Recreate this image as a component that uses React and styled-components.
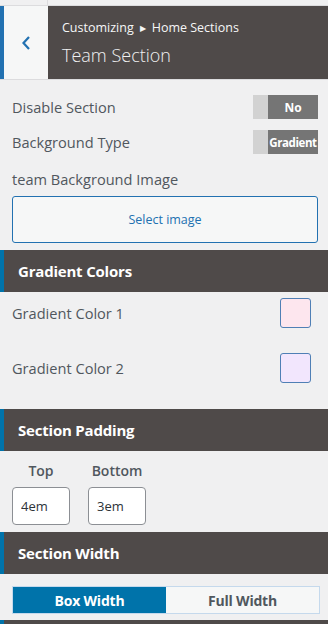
import React from "react";
import styled, { createGlobalStyle } from "styled-components";

const Global = createGlobalStyle`
  html, body { margin: 0; padding: 0; background: #f0f0f1; }
  body { font-family: "Open Sans", "Noto Sans", sans-serif; -webkit-font-smoothing: antialiased; }
  * { box-sizing: border-box; }
`;

const Panel = styled.div`
  width: 328px;
  height: 624px;
  overflow: hidden;
  background: #f0f0f1;
`;

const TopStrip = styled.div`
  height: 6px;
  border-bottom: 1px solid #dcdcde;
  display: flex;
`;

const StripCell = styled.div`
  width: 48px;
  border-right: 1px solid #dcdcde;
`;

const Header = styled.div`
  display: flex;
  height: 74px;
  border-bottom: 1px solid #dcdcde;
`;

const BackButton = styled.button`
  width: 48px;
  border: 0;
  border-left: 4px solid #2271b1;
  background: #f6f7f7;
  display: flex;
  align-items: center;
  justify-content: center;
  padding: 0;
  cursor: pointer;
`;

const TitleBox = styled.div`
  flex: 1;
  background: #4f4a49;
  padding: 13px 14px 0;
  color: #f0f0f1;
`;

const Crumb = styled.div`
  font-size: 12.5px;
  line-height: 18px;
  color: #f6f7f7;
  display: flex;
  align-items: center;
  gap: 6px;
`;

const Tri = styled.span`
  font-size: 8px;
`;

const Title = styled.div`
  font-size: 18px;
  font-weight: 300;
  line-height: 26px;
  margin-top: 5px;
  color: #f0f0f1;
`;

const Body = styled.div`
  padding: 0 10px 0 12px;
`;

const Row = styled.div`
  display: flex;
  align-items: center;
  justify-content: space-between;
  margin-top: ${(p) => p.$mt || 0}px;
  height: ${(p) => p.$h || 24}px;
`;

const Label = styled.div`
  font-size: 14.6px;
  color: #50575e;
`;

const Toggle = styled.div`
  width: 65px;
  height: 24px;
  display: flex;
`;

const ToggleOff = styled.div`
  width: 15px;
  background: #d2d2d2;
`;

const ToggleOn = styled.div`
  flex: 1;
  background: #757575;
  color: #fff;
  font-weight: 700;
  font-size: ${(p) => p.$fs || 12}px;
  letter-spacing: ${(p) => p.$ls || 0}px;
  display: flex;
  align-items: center;
  justify-content: center;
  white-space: nowrap;
`;

const SelectButton = styled.button`
  display: block;
  width: 306px;
  height: 47px;
  margin-top: 7px;
  border: 1px solid #2271b1;
  border-radius: 3px;
  background: #f6f7f7;
  color: #2271b1;
  font-family: inherit;
  font-size: 12.5px;
`;

const SectionHeader = styled.div`
  height: 42px;
  margin-top: ${(p) => p.$mt || 0}px;
  background: #4f4a49;
  border-left: 4px solid #0073aa;
  padding-left: 14px;
  display: flex;
  align-items: center;
  color: #fff;
  font-weight: 700;
  font-size: 15px;
  letter-spacing: -0.2px;
`;

const Swatch = styled.div`
  width: 31px;
  height: 30px;
  margin-right: 7px;
  border: 1px solid #4f7fb5;
  border-radius: 3px;
  background: ${(p) => p.$c};
`;

const PadGrid = styled.div`
  display: flex;
  gap: 18px;
  margin-top: 10px;
`;

const PadCol = styled.div`
  display: flex;
  flex-direction: column;
  align-items: center;
  width: 58px;
`;

const PadLabel = styled.div`
  font-size: 14px;
  font-weight: 600;
  color: #50575e;
  line-height: 20px;
  white-space: nowrap;
`;

const PadInput = styled.input`
  width: 58px;
  height: 38px;
  margin-top: 6px;
  border: 1px solid #8c8f94;
  border-radius: 4px;
  background: #fff;
  padding: 0 0 0 8px;
  font-family: inherit;
  font-size: 13px;
  color: #2c3338;
  outline: none;
`;

const Segments = styled.div`
  display: flex;
  width: 308px;
  height: 28px;
  margin-top: 12px;
  border: 1px solid #c5d9ec;
  background: #f6f7f7;
`;

const Segment = styled.div`
  flex: 1;
  display: flex;
  align-items: center;
  justify-content: center;
  font-size: 14px;
  font-weight: 700;
  letter-spacing: -0.2px;
  background: ${(p) => (p.$active ? "#0073aa" : "transparent")};
  color: ${(p) => (p.$active ? "#fff" : "#50575e")};
`;

export default function App() {
  return (
    <Panel>
      <Global />
      <TopStrip>
        <StripCell />
      </TopStrip>
      <Header>
        <BackButton aria-label="Back">
          <svg width="10" height="16" viewBox="0 0 10 16">
            <path d="M8 2 L2.5 8 L8 14" fill="none" stroke="#2271b1" strokeWidth="2.2" />
          </svg>
        </BackButton>
        <TitleBox>
          <Crumb>
            <span>Customizing</span>
            <Tri>▶</Tri>
            <span>Home Sections</span>
          </Crumb>
          <Title>Team Section</Title>
        </TitleBox>
      </Header>
      <Body>
        <Row $mt={15}>
          <Label>Disable Section</Label>
          <Toggle>
            <ToggleOff />
            <ToggleOn>No</ToggleOn>
          </Toggle>
        </Row>
        <Row $mt={11}>
          <Label>Background Type</Label>
          <Toggle>
            <ToggleOff />
            <ToggleOn $fs={11.5} $ls={-0.4}>Gradient</ToggleOn>
          </Toggle>
        </Row>
        <Row $mt={15} $h={20}>
          <Label>team Background Image</Label>
        </Row>
        <SelectButton>Select image</SelectButton>
      </Body>
      <SectionHeader $mt={7}>Gradient Colors</SectionHeader>
      <Body>
        <Row $mt={6} $h={30}>
          <Label>Gradient Color 1</Label>
          <Swatch $c="#fde6ee" />
        </Row>
        <Row $mt={25} $h={30}>
          <Label>Gradient Color 2</Label>
          <Swatch $c="#f2e6fd" />
        </Row>
      </Body>
      <SectionHeader $mt={26}>Section Padding</SectionHeader>
      <Body>
        <PadGrid>
          <PadCol>
            <PadLabel>Top</PadLabel>
            <PadInput defaultValue="4em" />
          </PadCol>
          <PadCol>
            <PadLabel>Bottom</PadLabel>
            <PadInput defaultValue="3em" />
          </PadCol>
        </PadGrid>
      </Body>
      <SectionHeader $mt={7}>Section Width</SectionHeader>
      <Body>
        <Segments>
          <Segment $active>Box Width</Segment>
          <Segment>Full Width</Segment>
        </Segments>
      </Body>
      <SectionHeader $mt={6} />
    </Panel>
  );
}
